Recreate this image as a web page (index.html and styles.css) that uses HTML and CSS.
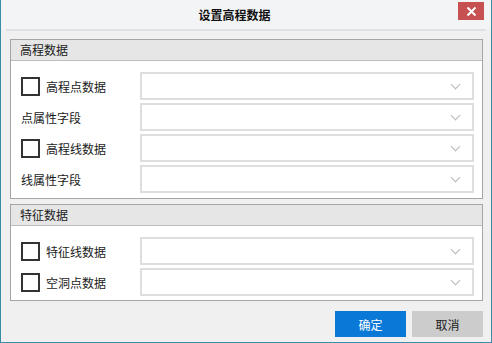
FILE: index.html
```html
<!DOCTYPE html>
<html lang="zh-CN">
  <head>
    <meta charset="UTF-8" />
    <title>设置高程数据</title>
    <link rel="stylesheet" href="styles.css">
  </head>
  <body>
    <div class="dialog">
      <div class="titlebar">
        <span class="title">设置高程数据</span>
        <div class="close-btn">
          <svg width="11" height="11" viewBox="0 0 11 11">
            <path d="M1.5 1.5 L9.5 9.5 M9.5 1.5 L1.5 9.5" stroke="#fff" stroke-width="2" />
          </svg>
        </div>
      </div>
      <div class="title-sep"></div>

      <div class="content">
        <!-- 高程数据 -->
        <div class="group">
          <div class="group-head">高程数据</div>
          <div class="group-body">
            <div class="row">
              <label class="check"><span class="box"></span>高程点数据</label>
              <div class="combo"><span class="chevron"></span></div>
            </div>
            <div class="row">
              <span class="field">点属性字段</span>
              <div class="combo"><span class="chevron"></span></div>
            </div>
            <div class="row">
              <label class="check"><span class="box"></span>高程线数据</label>
              <div class="combo"><span class="chevron"></span></div>
            </div>
            <div class="row">
              <span class="field">线属性字段</span>
              <div class="combo"><span class="chevron"></span></div>
            </div>
          </div>
        </div>

        <!-- 特征数据 -->
        <div class="group group-second">
          <div class="group-head">特征数据</div>
          <div class="group-body">
            <div class="row">
              <label class="check"><span class="box"></span>特征线数据</label>
              <div class="combo"><span class="chevron"></span></div>
            </div>
            <div class="row">
              <label class="check"><span class="box"></span>空洞点数据</label>
              <div class="combo"><span class="chevron"></span></div>
            </div>
          </div>
        </div>

        <div class="actions">
          <button class="btn btn-primary">确定</button>
          <button class="btn">取消</button>
        </div>
      </div>
    </div>
  </body>
</html>
```

FILE: styles.css
```css
/* Global */
* {
  margin: 0;
  padding: 0;
  box-sizing: border-box;
  font-family: "Noto Sans CJK SC", "Noto Sans", sans-serif;
}

body {
  background-color: #f0f0f0;
  color: #1a1a1a;
  font-size: 12px;
}

/* Window frame */
.dialog {
  position: relative;
  width: 492px;
  height: 343px;
  border: 1px solid #3a8cab;
  border-top: none;
  background-color: #f0f0f0;
}

.titlebar {
  height: 29px;
  display: flex;
  justify-content: center;
  align-items: center;
  background-color: #f3f4f6;
}

.title {
  font-size: 12px;
  font-weight: 700;
  color: #111;
  margin-left: -23px;
}

.close-btn {
  position: absolute;
  top: 2px;
  right: 7px;
  width: 26px;
  height: 18px;
  background-color: #c75050;
  display: flex;
  justify-content: center;
  align-items: center;
}

.title-sep {
  height: 2px;
  margin: 0 5px;
  background-color: #e1e1e1;
}

.content {
  padding: 8px 8px 0 9px;
}

/* Group boxes */
.group {
  border: 1px solid #a5a5a5;
  background-color: #fff;
}

.group-second {
  margin-top: 5px;
}

.group-head {
  height: 21px;
  line-height: 20px;
  padding-left: 9px;
  font-size: 12px;
  background-color: #e6e6e6;
  border-bottom: 1px solid #bdbdbd;
}

.group-body {
  display: flex;
  flex-direction: column;
  gap: 3px;
  padding: 11px 8px 5px 10px;
}

.group-second .group-body {
  padding-top: 11px;
  padding-bottom: 4px;
}

.row {
  display: flex;
  align-items: center;
  height: 28px;
}

.check,
.field {
  width: 119px;
  display: flex;
  align-items: center;
  white-space: nowrap;
}

.box {
  width: 19px;
  height: 19px;
  border: 2px solid #333;
  background-color: #fff;
  margin-right: 6px;
}

/* Combo boxes */
.combo {
  flex: 1;
  height: 28px;
  border: 2px solid #dedede;
  background-color: #fff;
  display: flex;
  justify-content: flex-end;
  align-items: center;
  padding-right: 13px;
}

.chevron {
  width: 7px;
  height: 7px;
  border-right: 1px solid #b8b8b8;
  border-bottom: 1px solid #b8b8b8;
  transform: rotate(45deg);
  margin-top: -4px;
}

/* Footer buttons */
.actions {
  display: flex;
  justify-content: flex-end;
  gap: 6px;
  margin-top: 10px;
}

.btn {
  width: 71px;
  height: 26px;
  border: none;
  font-size: 12px;
  color: #1a1a1a;
  background-color: #cccccc;
}

.btn-primary {
  background-color: #0a78d7;
  color: #fff;
}
```
